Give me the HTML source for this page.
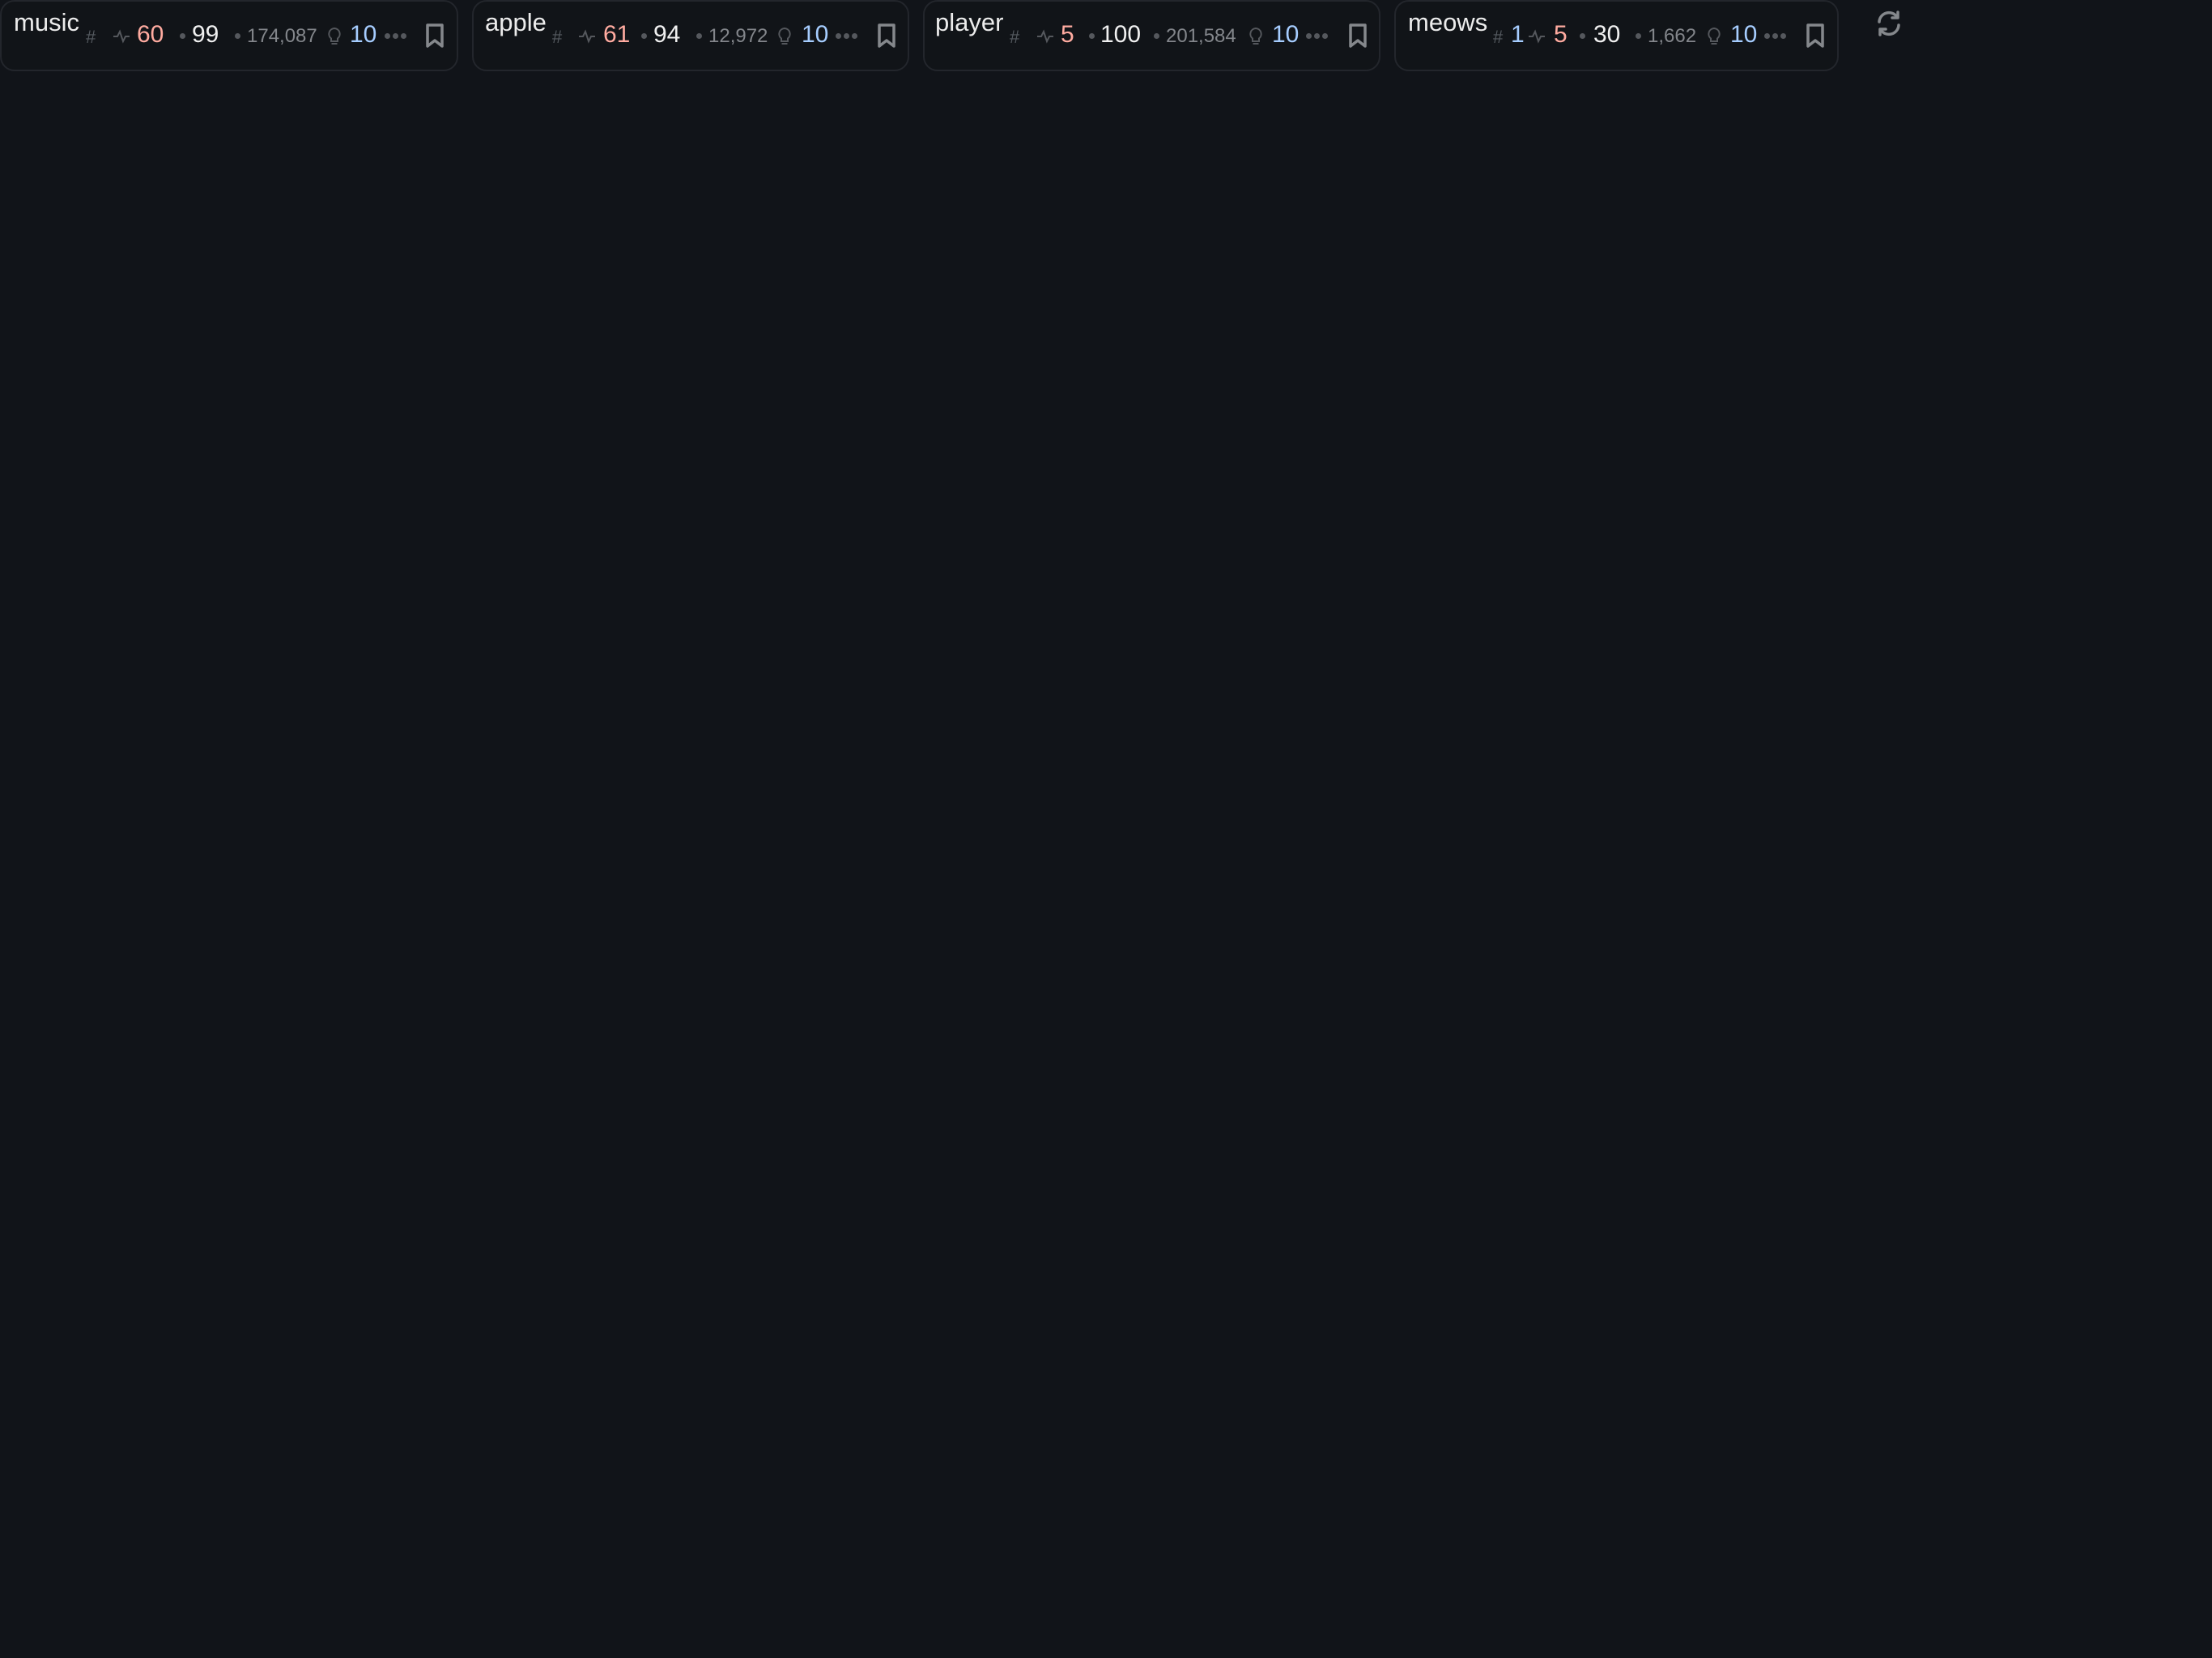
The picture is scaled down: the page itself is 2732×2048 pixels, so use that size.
<!DOCTYPE html>
<html><head><meta charset="utf-8"><style>
html,body{margin:0;padding:0;background:#111419;width:2732px;height:2048px;overflow:hidden;font-family:"Liberation Sans",sans-serif}
.c{position:absolute;top:0px;height:88px;border:2px solid #23262c;border-radius:18px;background:#111418;box-sizing:border-box}
.c span,.c svg{position:absolute;line-height:1;white-space:nowrap}
.t{font-size:31px;color:#ececec;top:10px}
.h{font-size:22px;color:#555a60;top:33px}
.r{font-size:30px;color:#ffaba0;top:26px}
.w{font-size:30px;color:#f0f0f0;top:26px}
.b{font-size:30px;color:#a6cdff;top:26px}
.s{font-size:24px;color:#83868b;top:31px}
.d{width:7px;height:7px;border-radius:50%;background:#55585d;position:absolute;top:39px}
</style></head><body>
<div class="c" style="left:0;width:566px">
<span class="t" style="left:15px">music</span>
<span class="h" style="left:104px">#</span>
<svg style="left:137px;top:34px" width="22" height="18" viewBox="0 0 22 18"><path d="M1 9h5l3-6 4 12 3-6h5" fill="none" stroke="#55585d" stroke-width="2"/></svg>
<span class="r" style="left:167px">60</span>
<i class="d" style="left:220px"></i>
<span class="w" style="left:235px">99</span>
<i class="d" style="left:288px"></i>
<span class="s" style="left:303px">174,087</span>
<svg style="left:402px;top:31px" width="18" height="25" viewBox="0 0 18 25"><path d="M9 2a7 7 0 0 0-4 12.5V18h8v-3.5A7 7 0 0 0 9 2zM5.5 21h7" fill="none" stroke="#55585d" stroke-width="2"/></svg>
<span class="b" style="left:430px">10</span>
<i class="d" style="left:473px"></i><i class="d" style="left:483px"></i><i class="d" style="left:493px"></i>
<svg style="left:523px;top:26px" width="24" height="32" viewBox="0 0 24 32"><path d="M3 3h18v26l-9-7-9 7z" fill="none" stroke="#85888c" stroke-width="3.5" stroke-linejoin="round"/></svg>
</div>

<div class="c" style="left:583px;width:540px">
<span class="t" style="left:14px">apple</span>
<span class="h" style="left:97px">#</span>
<svg style="left:129px;top:34px" width="22" height="18" viewBox="0 0 22 18"><path d="M1 9h5l3-6 4 12 3-6h5" fill="none" stroke="#55585d" stroke-width="2"/></svg>
<span class="r" style="left:160px">61</span>
<i class="d" style="left:207px"></i>
<span class="w" style="left:222px">94</span>
<i class="d" style="left:275px"></i>
<span class="s" style="left:290px">12,972</span>
<svg style="left:375px;top:31px" width="18" height="25" viewBox="0 0 18 25"><path d="M9 2a7 7 0 0 0-4 12.5V18h8v-3.5A7 7 0 0 0 9 2zM5.5 21h7" fill="none" stroke="#55585d" stroke-width="2"/></svg>
<span class="b" style="left:405px">10</span>
<i class="d" style="left:447px"></i><i class="d" style="left:457px"></i><i class="d" style="left:467px"></i>
<svg style="left:498px;top:26px" width="24" height="32" viewBox="0 0 24 32"><path d="M3 3h18v26l-9-7-9 7z" fill="none" stroke="#85888c" stroke-width="3.5" stroke-linejoin="round"/></svg>
</div>

<div class="c" style="left:1140px;width:565px">
<span class="t" style="left:13px">player</span>
<span class="h" style="left:105px">#</span>
<svg style="left:138px;top:34px" width="22" height="18" viewBox="0 0 22 18"><path d="M1 9h5l3-6 4 12 3-6h5" fill="none" stroke="#55585d" stroke-width="2"/></svg>
<span class="r" style="left:168px">5</span>
<i class="d" style="left:203px"></i>
<span class="w" style="left:217px">100</span>
<i class="d" style="left:283px"></i>
<span class="s" style="left:298px">201,584</span>
<svg style="left:400px;top:31px" width="18" height="25" viewBox="0 0 18 25"><path d="M9 2a7 7 0 0 0-4 12.5V18h8v-3.5A7 7 0 0 0 9 2zM5.5 21h7" fill="none" stroke="#55585d" stroke-width="2"/></svg>
<span class="b" style="left:429px">10</span>
<i class="d" style="left:471px"></i><i class="d" style="left:481px"></i><i class="d" style="left:491px"></i>
<svg style="left:523px;top:26px" width="24" height="32" viewBox="0 0 24 32"><path d="M3 3h18v26l-9-7-9 7z" fill="none" stroke="#85888c" stroke-width="3.5" stroke-linejoin="round"/></svg>
</div>

<div class="c" style="left:1722px;width:549px">
<span class="t" style="left:15px">meows</span>
<span class="h" style="left:120px">#</span>
<span class="b" style="left:142px">1</span>
<svg style="left:163px;top:34px" width="22" height="18" viewBox="0 0 22 18"><path d="M1 9h5l3-6 4 12 3-6h5" fill="none" stroke="#55585d" stroke-width="2"/></svg>
<span class="r" style="left:195px">5</span>
<i class="d" style="left:227px"></i>
<span class="w" style="left:244px">30</span>
<i class="d" style="left:296px"></i>
<span class="s" style="left:311px">1,662</span>
<svg style="left:384px;top:31px" width="18" height="25" viewBox="0 0 18 25"><path d="M9 2a7 7 0 0 0-4 12.5V18h8v-3.5A7 7 0 0 0 9 2zM5.5 21h7" fill="none" stroke="#55585d" stroke-width="2"/></svg>
<span class="b" style="left:413px">10</span>
<i class="d" style="left:455px"></i><i class="d" style="left:465px"></i><i class="d" style="left:475px"></i>
<svg style="left:506px;top:26px" width="24" height="32" viewBox="0 0 24 32"><path d="M3 3h18v26l-9-7-9 7z" fill="none" stroke="#85888c" stroke-width="3.5" stroke-linejoin="round"/></svg>
</div>

<svg style="position:absolute;left:2316px;top:12px" width="34" height="34" viewBox="0 0 34 34"><g fill="none" stroke="#85888c" stroke-width="3.5" stroke-linecap="round" stroke-linejoin="round"><path d="M5 15A12 12 0 0 1 27 9"/><path d="M28 3v7h-7"/><path d="M29 19A12 12 0 0 1 7 25"/><path d="M6 31v-7h7"/></g></svg>
</body></html>
